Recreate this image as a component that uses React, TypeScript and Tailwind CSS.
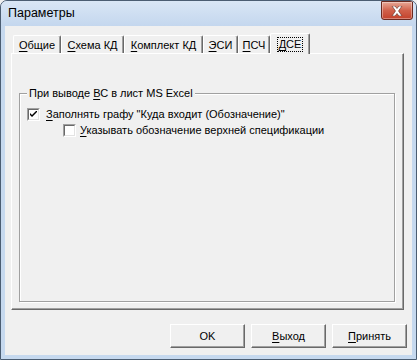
import React from "react";

function U({ children }: { children: React.ReactNode }) {
  return <span className="underline underline-offset-[2px] decoration-[1px]">{children}</span>;
}

function Tab({ w, children, selected }: { w: string; children: React.ReactNode; selected?: boolean }) {
  if (selected) {
    return (
      <div
        className={`${w} h-[21px] -mb-[1px] relative z-10 bg-[#f0f0f0] border-l border-t border-white border-r border-r-[#696969] shadow-[inset_-1px_0_0_#a0a0a0] rounded-tl-[2px] rounded-tr-[2px] flex items-start justify-center pt-[3px]`}
      >
        <span className="border border-dotted border-black px-[1px] leading-[13px]">{children}</span>
      </div>
    );
  }
  return (
    <div
      className={`${w} h-[18px] border-l border-t border-white border-r border-r-[#696969] shadow-[inset_-1px_0_0_#a0a0a0] rounded-tl-[2px] rounded-tr-[2px] flex items-start justify-center pt-[3px] leading-[13px]`}
    >
      {children}
    </div>
  );
}

function CheckBox({ checked }: { checked?: boolean }) {
  return (
    <div className="w-[13px] h-[13px] shrink-0 border border-t-[#a0a0a0] border-l-[#a0a0a0] border-r-white border-b-white">
      <div className="w-full h-full bg-white border border-t-[#696969] border-l-[#696969] border-r-[#e3e3e3] border-b-[#e3e3e3] flex items-center justify-center">
        {checked && (
          <svg width="7" height="7" viewBox="0 0 7 7">
            <path d="M0 2 L0 4 L2 6 L7 1 L7 -1 L2 4 Z" fill="#000" />
          </svg>
        )}
      </div>
    </div>
  );
}

function Button({ children }: { children: React.ReactNode }) {
  return (
    <div className="w-[75px] h-[24px] border border-t-white border-l-white border-r-[#696969] border-b-[#696969] shadow-[inset_-1px_-1px_0_#a0a0a0] bg-[#f0f0f0] flex items-center justify-center">
      {children}
    </div>
  );
}

export default function App() {
  return (
    <div className="w-[417px] h-[360px] bg-[#f0f0f0]">
      <div className="w-[417px] h-[360px] relative flex flex-col bg-[#c6d9ef] border border-[#4b5d72] rounded-t-[7px] overflow-hidden font-['Liberation_Sans',Arial,sans-serif] text-[11px] text-black">
        {/* Title bar */}
        <div className="h-[25px] shrink-0 flex items-center pl-[7px] text-[12.5px] bg-gradient-to-b from-[#d9e6f5] to-[#c4d7ee]">
          Параметры
        </div>
        <div className="absolute right-[3px] top-0 w-[32px] h-[19px] rounded-b-[3px] border border-[#6b2a20] bg-gradient-to-b from-[#e6a796] via-[#d0604a] to-[#c3412b] flex items-center justify-center shadow-[inset_0_0_0_1px_rgba(255,255,255,0.35)]">
          <svg width="12" height="10" viewBox="0 0 12 10">
            <path d="M1 0 H4 L6 2.5 L8 0 H11 L7.5 5 L11 10 H8 L6 7.5 L4 10 H1 L4.5 5 Z" fill="#fff" stroke="#5a2a22" strokeWidth="0.6" />
          </svg>
        </div>

        {/* Client area */}
        <div className="flex-1 mx-[4px] mb-[4px] bg-[#f0f0f0] flex flex-col">
          {/* Tabs */}
          <div className="pt-[7px] pl-[8px] flex items-end">
            <Tab w="w-[48px]">
              <U>О</U>бщие
            </Tab>
            <Tab w="w-[63px]">
              <U>С</U>хема КД
            </Tab>
            <Tab w="w-[79px]">
              <U>К</U>омплект КД
            </Tab>
            <Tab w="w-[35px]">
              <U>Э</U>СИ
            </Tab>
            <Tab w="w-[32px]">
              <U>П</U>СЧ
            </Tab>
            <Tab w="w-[40px]" selected>
              <U>Д</U>СЕ
            </Tab>
          </div>
          {/* Panel */}
          <div className="ml-[6px] mr-[8px] h-[257px] border border-t-white border-l-white border-r-[#696969] border-b-[#696969] shadow-[inset_-1px_-1px_0_#a0a0a0] pt-[39px] pl-[7px] pr-[8px] pb-[7px] flex flex-col">
            <div className="relative flex-1 border border-[#a0a0a0] shadow-[inset_1px_1px_0_#fff,1px_1px_0_#fff] pt-[14px] pl-[7px]">
              <div className="absolute -top-[7px] left-[7px] px-[2px] bg-[#f0f0f0] leading-[13px]">
                При выводе <U>В</U>С в лист MS Excel
              </div>
              <div className="flex items-center gap-[6px] h-[13px]">
                <CheckBox checked />
                <span className="leading-[13px]">
                  <U>З</U>аполнять графу "Куда входит (Обозначение)"
                </span>
              </div>
              <div className="flex items-center gap-[4px] h-[13px] mt-[3px] ml-[36px]">
                <CheckBox />
                <span className="leading-[13px]">
                  <U>У</U>казывать обозначение верхней спецификации
                </span>
              </div>
            </div>
          </div>
          {/* Buttons */}
          <div className="flex justify-end gap-[6px] pr-[5px] mt-[14px]">
            <Button>OK</Button>
            <Button>
              <span>
                <U>В</U>ыход
              </span>
            </Button>
            <Button>
              <span>
                <U>П</U>ринять
              </span>
            </Button>
          </div>
        </div>
      </div>
    </div>
  );
}
